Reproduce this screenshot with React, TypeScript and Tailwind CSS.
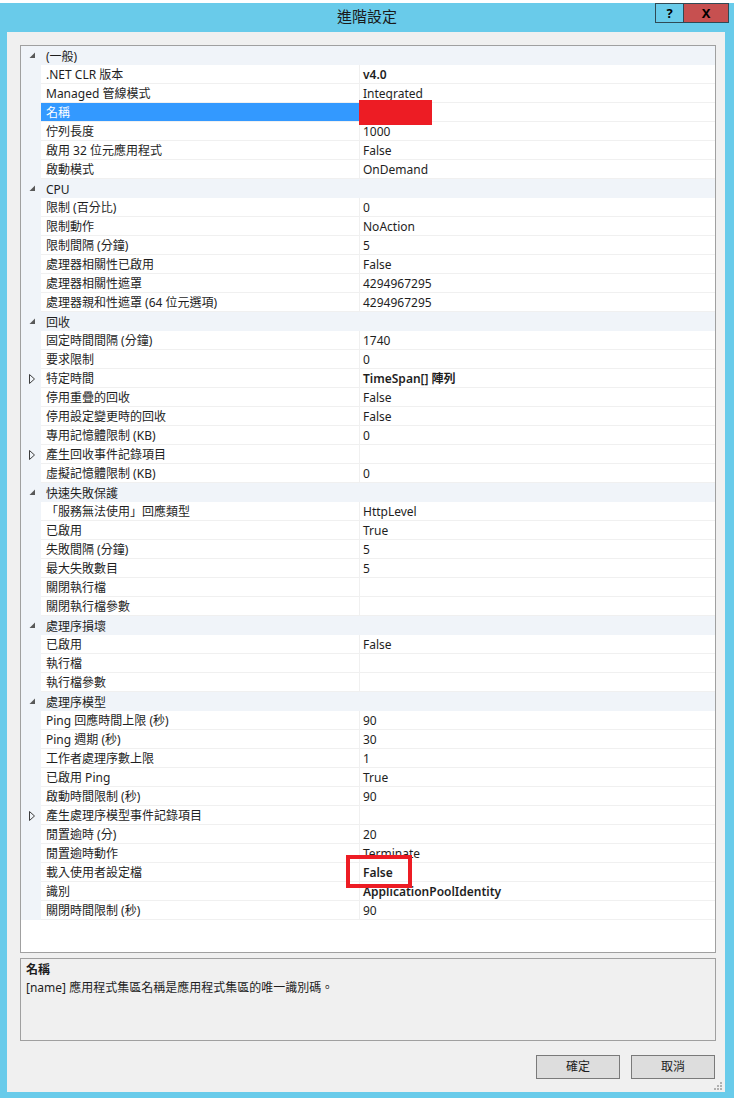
import React from "react";

type Row =
  | { kind: "cat"; label: string }
  | { kind: "prop"; label: string; value?: string; bold?: boolean; sub?: boolean; selected?: boolean };

const rows: Row[] = [
  { kind: "cat", label: "(一般)" },
  { kind: "prop", label: ".NET CLR 版本", value: "v4.0", bold: true },
  { kind: "prop", label: "Managed 管線模式", value: "Integrated" },
  { kind: "prop", label: "名稱", value: "", selected: true },
  { kind: "prop", label: "佇列長度", value: "1000" },
  { kind: "prop", label: "啟用 32 位元應用程式", value: "False" },
  { kind: "prop", label: "啟動模式", value: "OnDemand" },
  { kind: "cat", label: "CPU" },
  { kind: "prop", label: "限制 (百分比)", value: "0" },
  { kind: "prop", label: "限制動作", value: "NoAction" },
  { kind: "prop", label: "限制間隔 (分鐘)", value: "5" },
  { kind: "prop", label: "處理器相關性已啟用", value: "False" },
  { kind: "prop", label: "處理器相關性遮罩", value: "4294967295" },
  { kind: "prop", label: "處理器親和性遮罩 (64 位元選項)", value: "4294967295" },
  { kind: "cat", label: "回收" },
  { kind: "prop", label: "固定時間間隔 (分鐘)", value: "1740" },
  { kind: "prop", label: "要求限制", value: "0" },
  { kind: "prop", label: "特定時間", value: "TimeSpan[] 陣列", bold: true, sub: true },
  { kind: "prop", label: "停用重疊的回收", value: "False" },
  { kind: "prop", label: "停用設定變更時的回收", value: "False" },
  { kind: "prop", label: "專用記憶體限制 (KB)", value: "0" },
  { kind: "prop", label: "產生回收事件記錄項目", value: "", sub: true },
  { kind: "prop", label: "虛擬記憶體限制 (KB)", value: "0" },
  { kind: "cat", label: "快速失敗保護" },
  { kind: "prop", label: "「服務無法使用」回應類型", value: "HttpLevel" },
  { kind: "prop", label: "已啟用", value: "True" },
  { kind: "prop", label: "失敗間隔 (分鐘)", value: "5" },
  { kind: "prop", label: "最大失敗數目", value: "5" },
  { kind: "prop", label: "關閉執行檔", value: "" },
  { kind: "prop", label: "關閉執行檔參數", value: "" },
  { kind: "cat", label: "處理序損壞" },
  { kind: "prop", label: "已啟用", value: "False" },
  { kind: "prop", label: "執行檔", value: "" },
  { kind: "prop", label: "執行檔參數", value: "" },
  { kind: "cat", label: "處理序模型" },
  { kind: "prop", label: "Ping 回應時間上限 (秒)", value: "90" },
  { kind: "prop", label: "Ping 週期 (秒)", value: "30" },
  { kind: "prop", label: "工作者處理序數上限", value: "1" },
  { kind: "prop", label: "已啟用 Ping", value: "True" },
  { kind: "prop", label: "啟動時間限制 (秒)", value: "90" },
  { kind: "prop", label: "產生處理序模型事件記錄項目", value: "", sub: true },
  { kind: "prop", label: "閒置逾時 (分)", value: "20" },
  { kind: "prop", label: "閒置逾時動作", value: "Terminate" },
  { kind: "prop", label: "載入使用者設定檔", value: "False", bold: true },
  { kind: "prop", label: "識別", value: "ApplicationPoolIdentity", bold: true },
  { kind: "prop", label: "關閉時間限制 (秒)", value: "90" },
];

function Expanded() {
  return (
    <svg width="7" height="7" viewBox="0 0 7 7">
      <path d="M6 0.5 L6 6 L0.5 6 Z" fill="#595959" />
    </svg>
  );
}

function Collapsed() {
  return (
    <svg width="6" height="10" viewBox="0 0 6 10">
      <path d="M0.5 0.5 L5.5 5 L0.5 9.5 Z" fill="none" stroke="#3c3c3c" strokeWidth="1" />
    </svg>
  );
}

function GridRow({ row }: { row: Row }) {
  if (row.kind === "cat") {
    return (
      <div className="flex h-[19px] items-center bg-[#f0f4f9]">
        <div className="flex w-[20px] shrink-0 items-center justify-center pl-[2px] pb-[1px]">
          <Expanded />
        </div>
        <div className="pl-[5px] pt-[2px] text-[#1e1e1e]">{row.label}</div>
      </div>
    );
  }
  return (
    <div className="flex h-[19px]">
      <div className="flex w-[20px] shrink-0 items-center justify-center bg-[#f0f4f9] pl-[1px]">
        {row.sub && <Collapsed />}
      </div>
      <div
        className={`flex w-[318px] shrink-0 items-center border-b border-[#f0f0f0] pl-[5px] pt-[2px] ${
          row.selected ? "bg-[#3399ff] text-white" : "bg-white text-[#1e1e1e]"
        }`}
      >
        {row.label}
      </div>
      <div className="w-px shrink-0 bg-[#f0f0f0]" />
      <div
        className={`flex flex-1 items-center border-b border-[#f0f0f0] bg-white pl-[3px] pt-[2px] text-[#1e1e1e] ${
          row.bold ? "font-semibold" : ""
        }`}
      >
        {row.value}
      </div>
    </div>
  );
}

export default function App() {
  return (
    <div className="flex h-[1098px] w-[734px] flex-col bg-[#69cbea] font-['Noto_Sans','Noto_Sans_CJK_TC',sans-serif] text-[12px] leading-none">
      <div className="h-[3px] bg-white" />
      <div className="relative flex h-[29px] items-center justify-center">
        <span className="pb-[3px] text-[15px] text-[#1a1a1a]">進階設定</span>
        <div className="absolute right-[5px] top-0 flex h-[20px]">
          <div className="flex w-[28px] items-center justify-center border border-r-0 border-[#2f4a55] bg-[#69cbea] text-[13px] font-bold text-black">
            ?
          </div>
          <div className="flex w-[46px] items-center justify-center border border-[#2f4a55] bg-[#c75050] text-[13px] font-bold text-black">
            X
          </div>
        </div>
      </div>
      <div className="ml-[7px] mr-[9px] flex h-[1060px] flex-col bg-[#f0f0f0] pl-[13px] pr-[9px] pt-[13px]">
        <div className="relative h-[908px] border border-[#a0a0a0] bg-white">
          {rows.map((r, i) => (
            <GridRow key={i} row={r} />
          ))}
          <div className="absolute left-[338px] top-[54px] h-[25px] w-[73px] bg-[#ed1c24]" />
          <div className="absolute left-[325px] top-[809px] h-[33px] w-[66px] border-4 border-[#ed1c24]" />
        </div>
        <div className="mt-[5px] h-[83px] border border-[#a0a0a0] bg-[#f0f0f0] px-[5px] pt-[5px] text-[#1e1e1e]">
          <div className="font-semibold">名稱</div>
          <div className="mt-[6px]">[name] 應用程式集區名稱是應用程式集區的唯一識別碼。</div>
        </div>
        <div className="mt-[14px] flex justify-end gap-[11px] pr-[1px]">
          <button className="h-[24px] w-[84px] border border-[#7a7a7a] bg-[#dddddd] text-[#1e1e1e]">確定</button>
          <button className="h-[24px] w-[84px] border border-[#7a7a7a] bg-[#dddddd] text-[#1e1e1e]">取消</button>
        </div>
        <div className="mt-auto -mr-[6px] flex justify-end pb-[2px]">
          <svg width="9" height="9" viewBox="0 0 9 9">
            <rect x="7" y="1" width="2" height="2" fill="#b0b0b0" />
            <rect x="4" y="4" width="2" height="2" fill="#b0b0b0" />
            <rect x="7" y="4" width="2" height="2" fill="#b0b0b0" />
            <rect x="1" y="7" width="2" height="2" fill="#b0b0b0" />
            <rect x="4" y="7" width="2" height="2" fill="#b0b0b0" />
            <rect x="7" y="7" width="2" height="2" fill="#b0b0b0" />
          </svg>
        </div>
      </div>
    </div>
  );
}
